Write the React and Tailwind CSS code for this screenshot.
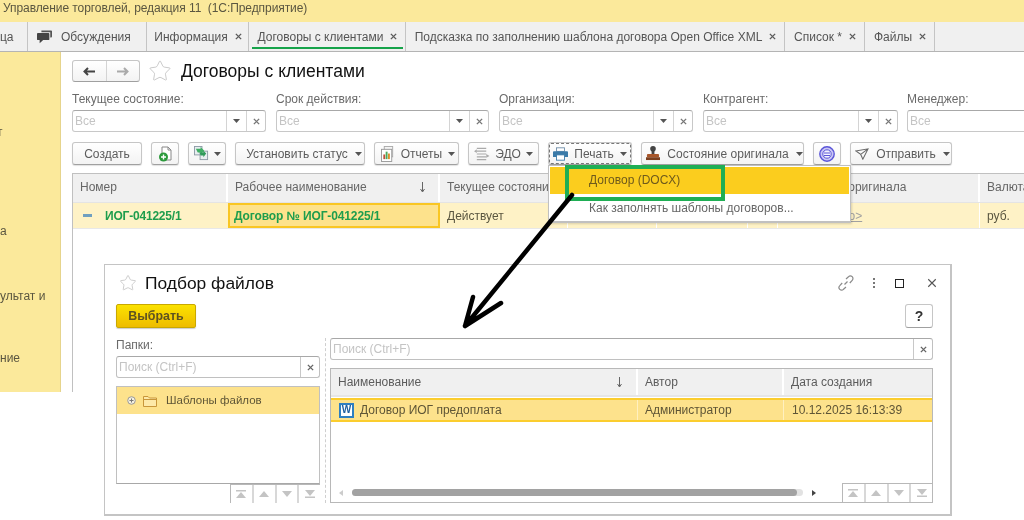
import { Star } from "lucide-react";

const TABS = [
  { label: "ца", w: "w-[28px]", cls: "!justify-start" },
  { label: "Обсуждения", w: "w-[119px]", chat: true, cls: "!justify-start !gap-[9px] pl-[9px]" },
  { label: "Информация", w: "w-[102px]", close: true, cls: "pl-[1px]" },
  { label: "Договоры с клиентами", w: "w-[157px]", close: true, active: true, cls: "pl-[1px]" },
  { label: "Подсказка по заполнению шаблона договора Open Office XML", w: "w-[379px]", close: true, cls: "pl-[1px]" },
  { label: "Список *", w: "w-[80px]", close: true, cls: "pl-[1px]" },
  { label: "Файлы", w: "w-[70px]", close: true, cls: "pl-[1px]" },
];

const FILTERS = [
  { label: "Текущее состояние:", w: "w-[194px]", mr: "mr-[10px]" },
  { label: "Срок действия:", w: "w-[213px]", mr: "mr-[10px]" },
  { label: "Организация:", w: "w-[194px]", mr: "mr-[10px]" },
  { label: "Контрагент:", w: "w-[195px]", mr: "mr-[9px]" },
  { label: "Менеджер:", w: "w-[150px]", open: true },
];

const COLS = [
  { w: "w-[155px]", head: "Номер" },
  { w: "w-[212px]", head: "Рабочее наименование" },
  { w: "w-[128px]", head: "Текущее состояние" },
  { w: "w-[89px]", head: "" },
  { w: "w-[91px]", head: "" },
  { w: "w-[30px]", head: "" },
  { w: "w-[202px]", head: "Состояние оригинала" },
  { w: "w-[60px]", head: "Валюта" },
];

function Caret() {
  return (
    <svg width="7" height="4" viewBox="0 0 7 4" className="shrink-0">
      <polygon points="0,0 7,0 3.5,4" fill="#555" />
    </svg>
  );
}

function Cross({ color = "#5c5c5c", size = 8, width = 1.6 }) {
  return (
    <svg width={size} height={size} viewBox="0 0 8 8" className="shrink-0">
      <path d="M1 1L7 7M7 1L1 7" stroke={color} strokeWidth={width} />
    </svg>
  );
}

function SortArrow() {
  return (
    <svg width="7" height="11" viewBox="0 0 7 11" className="mt-[8px] shrink-0">
      <path d="M3.500 0V9M1.500 7L3.500 10L5.500 7" fill="none" stroke="#555" strokeWidth="0.900" />
    </svg>
  );
}

function ChatIcon() {
  return (
    <svg width="15" height="14" viewBox="0 0 17 15" className="shrink-0">
      <path d="M5 0H16a1 1 0 0 1 1 1V7a1 1 0 0 1-1 1H15V2H5Z" fill="#555" />
      <path d="M1 3H13a1 1 0 0 1 1 1V10a1 1 0 0 1-1 1H7L3 14.500V11H1a1 1 0 0 1-1-1V4a1 1 0 0 1 1-1Z" fill="#444" />
    </svg>
  );
}

function DocPlusIcon() {
  return (
    <svg width="15" height="16" viewBox="0 0 15 16">
      <path d="M4 1H10L13 4V14H4Z" fill="#fff" stroke="#888" />
      <path d="M10 1V4H13" fill="none" stroke="#888" />
      <circle cx="5.500" cy="11" r="4.500" fill="#2c9a3c" />
      <path d="M3 11H8M5.500 8.500V13.500" stroke="#fff" strokeWidth="1.400" />
    </svg>
  );
}

function CopyIcon() {
  return (
    <svg width="15" height="15" viewBox="0 0 16 16">
      <rect x="0.500" y="0.500" width="8" height="9" fill="#e8eef0" stroke="#8d9ca6" />
      <rect x="6.500" y="5.500" width="8" height="9" fill="#e8eef0" stroke="#8d9ca6" />
      <path d="M2 3L7 3L7 1L11 5L7 9L7 7L4 7Z" fill="#3fae64" />
      <path d="M6 7L10 7L10 5L13 8L10 12L10 10L7 10Z" fill="#2f9a5a" />
    </svg>
  );
}

function ReportIcon() {
  return (
    <svg width="14" height="16" viewBox="0 0 15 17">
      <rect x="3.500" y="0.500" width="9" height="11" fill="#f4f4f4" stroke="#aaa" />
      <rect x="0.500" y="3.500" width="11" height="13" fill="#fff" stroke="#999" />
      <rect x="2.500" y="9" width="2" height="5" fill="#c0503b" />
      <rect x="5" y="6" width="2" height="8" fill="#4caa5c" />
      <rect x="7.500" y="8" width="2" height="6" fill="#d9902c" />
    </svg>
  );
}

function EdoIcon() {
  return (
    <svg width="16" height="14" viewBox="0 0 17 14">
      <path d="M3 1H13M3 4H13M3 7H13M3 10H13M3 13H13" stroke="#aaa" strokeWidth="1.200" />
      <path d="M0 4L3 2V6Z" fill="#aaa" />
      <path d="M16.500 9L13 7V11Z" fill="#aaa" />
    </svg>
  );
}

function PrinterIcon() {
  return (
    <svg width="15" height="14" viewBox="0 0 17 15">
      <rect x="4" y="0.500" width="9" height="4" fill="#fff" stroke="#6a8aa6" />
      <path d="M1 4.500H16a1 1 0 0 1 1 1V11H0V5.500a1 1 0 0 1 1-1Z" fill="#3a7aa8" />
      <rect x="4" y="8.500" width="9" height="6" fill="#fff" stroke="#3a7aa8" />
    </svg>
  );
}

function StampIcon() {
  return (
    <svg width="14" height="15" viewBox="0 0 15 16">
      <circle cx="7.500" cy="3" r="3" fill="#444" />
      <rect x="6" y="5" width="3" height="4" fill="#444" />
      <rect x="1" y="8.500" width="13" height="3.500" rx="1" fill="#a8562a" />
      <rect x="0" y="12" width="15" height="3" fill="#7c3f1e" />
    </svg>
  );
}

function PurpleIcon() {
  return (
    <svg width="16" height="16" viewBox="0 0 16 16">
      <circle cx="8" cy="8" r="7.200" fill="#c9c6f4" stroke="#5a55d8" strokeWidth="1.400" />
      <circle cx="8" cy="8" r="4.200" fill="#f4f4ff" stroke="#5a55d8" />
      <path d="M5 7H11M5 9.500H11" stroke="#5a55d8" />
    </svg>
  );
}

function PlaneIcon() {
  return (
    <svg width="14" height="12" viewBox="0 0 16 14">
      <path d="M0.800 3.500L15 1L9 13L6.500 7.500ZM6.500 7.500L15 1" fill="none" stroke="#666" strokeWidth="1.200" />
    </svg>
  );
}

function WordIcon() {
  return (
    <div className="flex h-[15px] w-[15px] shrink-0 items-center justify-center border-2 border-[#2f7fc1] bg-white text-[10px] leading-none font-bold text-[#1f5f9f]">
      W
    </div>
  );
}

function FolderIcon() {
  return (
    <svg width="14" height="12" viewBox="0 0 14 12">
      <path d="M0.500 11.500V1.500H5L6.500 3H13.500V11.500Z" fill="#fde9a8" stroke="#c8963a" />
      <path d="M0.500 4.500H13.500" stroke="#c8963a" />
    </svg>
  );
}

function PlusCircle() {
  return (
    <svg width="9" height="9" viewBox="0 0 9 9">
      <circle cx="4.500" cy="4.500" r="3.800" fill="#f4f0e0" stroke="#999" />
      <path d="M2.500 4.500H6.500M4.500 2.500V6.500" stroke="#777" />
    </svg>
  );
}

function LinkIcon() {
  return (
    <svg width="16" height="16" viewBox="0 0 16 16" fill="none" stroke="#8a8a8a" strokeWidth="1.200">
      <path d="M6.500 9.500L9.500 6.500" />
      <path d="M8 4L10.500 1.700a2.600 2.600 0 0 1 3.700 3.700L11.800 8" />
      <path d="M8 12L5.500 14.300a2.600 2.600 0 0 1-3.700-3.700L4.200 8" />
    </svg>
  );
}

function NavIcon({ dir }) {
  const paths = {
    first: <><rect x="0" y="0" width="10" height="1.500" fill="#c4c4c4" /><polygon points="5,2 10,8 0,8" fill="#c4c4c4" /></>,
    up: <polygon points="5,1 10,7 0,7" fill="#c4c4c4" />,
    down: <polygon points="0,1 10,1 5,7" fill="#c4c4c4" />,
    last: <><polygon points="0,0 10,0 5,6 " fill="#c4c4c4" /><rect x="0" y="6.500" width="10" height="1.500" fill="#c4c4c4" /></>,
  };
  return <svg width="10" height="8" viewBox="0 0 10 8">{paths[dir]}</svg>;
}

function NavButtons() {
  return (
    <div className="flex h-[19px] w-[90px] shrink-0 border-t border-l border-[#b8b8b8] bg-white">
      {["first", "up", "down", "last"].map((dir, i) => (
        <div key={dir} className={`flex flex-1 items-center justify-center ${i < 3 ? "border-r-2 border-[#d8d8d8]" : ""}`}>
          <NavIcon dir={dir} />
        </div>
      ))}
    </div>
  );
}

function Button({ w, children, cls = "" }) {
  return (
    <div className={`flex h-[23px] ${w} shrink-0 items-center justify-center gap-[7px] rounded-[3px] border border-[#c6c6c6] border-b-[#a0a0a0] bg-gradient-to-b from-white to-[#f3f3f3] text-[12px] text-[#5c5c5c] shadow-[0_1px_1px_rgba(0,0,0,0.12)] ${cls}`}>
      {children}
    </div>
  );
}

function Filter({ label, w, mr = "", open }) {
  return (
    <div className={`${w} ${mr} shrink-0`}>
      <div className="h-[18px] text-[12px] leading-[14px] text-[#6a6a6a]">{label}</div>
      <div className={`flex h-[22px] rounded-[3px] border border-[#c8c8c8] border-t-[#a8a8a8] bg-white text-[12px] ${open ? "rounded-r-none border-r-0" : ""}`}>
        <div className="flex-1 pl-[2px] leading-[21px] text-[#c4c4c4]">Все</div>
        {!open && (
          <>
            <div className="flex w-[20px] items-center justify-center border-l border-[#d4d4d4]"><Caret /></div>
            <div className="flex w-[19px] items-center justify-center border-l border-[#d4d4d4]"><Cross color="#777" size={7} /></div>
          </>
        )}
      </div>
    </div>
  );
}

function SearchBox() {
  return (
    <div className="flex h-[22px] rounded-[3px] border border-[#c0c0c0] border-t-[#a8a8a8] bg-white text-[12px]">
      <div className="flex-1 pl-[2px] leading-[21px] text-[#c4c4c4]">Поиск (Ctrl+F)</div>
      <div className="flex w-[19px] items-center justify-center border-l border-[#c8c8c8]"><Cross color="#666" size={7} /></div>
    </div>
  );
}

function FileDialog() {
  return (
    <div className="absolute top-[264px] left-[104px] h-[252px] w-[848px] border border-r-2 border-b-2 border-[#c4c4c4] bg-white text-[#5c5c5c]">
      <div className="mb-[3px] flex h-[36px] items-center pr-[13px] pl-[14px]">
        <Star size={18} strokeWidth={1} color="#bdbdbd" />
        <div className="ml-[8px] flex-1 text-[17.4px] text-[#111]">Подбор файлов</div>
        <LinkIcon />
        <div className="ml-[19px] flex flex-col gap-[1.500px]">
          <div className="h-[2.500px] w-[2.500px] bg-[#777]" />
          <div className="h-[2.500px] w-[2.500px] bg-[#777]" />
          <div className="h-[2.500px] w-[2.500px] bg-[#777]" />
        </div>
        <div className="ml-[20px] h-[9px] w-[9px] border border-[#222]" />
        <div className="ml-[23px]"><Cross color="#555" size={10} width={0.9} /></div>
      </div>
      <div className="flex justify-between pr-[17px] pl-[11px]">
        <div className="flex h-[24px] w-[80px] items-center justify-center rounded-[2px] border border-[#c9a800] bg-gradient-to-b from-[#fbe200] to-[#eebc00] text-[12.4px] font-bold text-[#5e5320] shadow-[0_1px_1px_rgba(0,0,0,0.2)]">
          Выбрать
        </div>
        <div className="flex h-[24px] w-[28px] items-center justify-center rounded-[3px] border border-[#c6c6c6] border-b-[#a0a0a0] bg-white text-[14px] font-bold text-[#333]">
          ?
        </div>
      </div>
      <div className="mt-[10px] flex pl-[11px]">
        <div className="w-[204px] shrink-0">
          <div className="h-[18px] text-[12px] leading-[14px] text-[#6a6a6a]">Папки:</div>
          <SearchBox />
          <div className="mt-[8px] flex h-[117px] flex-col">
            <div className="flex-1 border border-[#c0c0c0] border-b-[#a8a8a8]">
              <div className="flex h-[27px] items-center bg-[#fde28c] pl-[10px] text-[11.5px]">
                <PlusCircle />
                <div className="ml-[7px]"><FolderIcon /></div>
                <div className="ml-[9px] text-[#5e5536]">Шаблоны файлов</div>
              </div>
            </div>
            <div className="flex justify-end"><NavButtons /></div>
          </div>
        </div>
        <div className="flex w-[10px] shrink-0 justify-center">
          <div className="w-0 border-l border-dashed border-[#cfcfcf]" />
        </div>
        <div className="w-[603px] shrink-0">
          <SearchBox />
          <div className="mt-[8px] flex h-[135px] flex-col border border-[#b8b8b8] text-[12px]">
            <div className="flex h-[28px] shrink-0 border-b-2 border-[#e6e6e6] bg-[#f0f0f0] leading-[27px]">
              <div className="flex w-[307px] justify-between border-r-2 border-white pr-[13px] pl-[7px]">
                <span>Наименование</span>
                <SortArrow />
              </div>
              <div className="w-[146px] border-r-2 border-white pl-[7px]">Автор</div>
              <div className="flex-1 pl-[7px]">Дата создания</div>
            </div>
            <div className="mt-[1px] flex h-[24px] shrink-0 border-y-2 border-[#fbcd2e] bg-[#fde28c] leading-[20px] text-[#5e5536]">
              <div className="flex w-[307px] items-center gap-[6px] border-r border-[#fff0c0] pl-[8px]">
                <WordIcon />
                <span>Договор ИОГ предоплата</span>
              </div>
              <div className="w-[146px] border-r border-[#fff0c0] pl-[7px]">Администратор</div>
              <div className="flex-1 pl-[8px]">10.12.2025 16:13:39</div>
            </div>
            <div className="flex flex-1 items-end">
              <div className="flex h-[19px] flex-1 items-center">
                <svg width="4" height="6" viewBox="0 0 4 6" className="ml-[8px]"><polygon points="4,0 4,6 0,3" fill="#ccc" /></svg>
                <div className="ml-[9px] h-[7px] w-[451px] rounded-full bg-[#e2e2e2]">
                  <div className="h-full w-[445px] rounded-full bg-[#a2a2a2]" />
                </div>
                <svg width="4" height="6" viewBox="0 0 4 6" className="ml-[9px]"><polygon points="0,0 0,6 4,3" fill="#444" /></svg>
              </div>
              <NavButtons />
            </div>
          </div>
        </div>
      </div>
    </div>
  );
}

export default function App() {
  return (
    <div className="relative h-[520px] w-[1024px] overflow-hidden bg-white font-['Liberation_Sans',Arial,sans-serif] text-[12px] blur-[0.35px]">
      {/* Title bar */}
      <div className="h-[22px] bg-[#fbe99b] pl-[3px] text-[12px] leading-[17px] tracking-[-0.07px] whitespace-pre text-[#5a5640]">
        Управление торговлей, редакция 11  (1С:Предприятие)
      </div>

      {/* Tabs */}
      <div className="flex h-[30px] border-b-[1.500px] border-[#b4b4b4] bg-[#f0f0f0] text-[#555]">
        {TABS.map((t) => (
          <div key={t.label} className={`relative flex ${t.w} shrink-0 items-center justify-center gap-[7px] border-r border-[#c4c4c4] ${t.cls}`}>
            {t.chat && <ChatIcon />}
            <span className="whitespace-nowrap">{t.label}</span>
            {t.close && <Cross size={7} />}
            {t.active && <div className="absolute right-[2px] bottom-[2px] left-[3px] h-[2px] bg-[#16a34a]" />}
          </div>
        ))}
      </div>

      <div className="flex h-[340px]">
        {/* Left panel, cut off by the crop */}
        <div className="w-[61px] shrink-0 overflow-hidden border-r border-[#e6d48c] bg-[#fbe99b] whitespace-nowrap text-[#5a5640]">
          <div className="mt-[73px] -ml-[3px] h-[14px] leading-[14px]">т</div>
          <div className="mt-[85px] h-[14px] leading-[14px]">а</div>
          <div className="mt-[51px] h-[14px] leading-[14px]">ультат и</div>
          <div className="mt-[48px] h-[14px] leading-[14px]">ние</div>
        </div>

        {/* Main form */}
        <div className="flex min-w-0 flex-1 flex-col overflow-hidden pt-[8px] pl-[11px]">
          <div className="flex h-[22px] items-center">
            <div className="flex h-[22px] w-[68px] rounded-[3px] border border-[#c6c6c6] border-b-[#a0a0a0] bg-gradient-to-b from-white to-[#f3f3f3]">
              <div className="flex flex-1 items-center justify-center border-r border-[#d4d4d4] text-[#444]">
                <svg width="12" height="9" viewBox="0 0 12 9"><path d="M12 4.500H3M5 1L1.500 4.500L5 8" fill="none" stroke="#444" strokeWidth="2" /></svg>
              </div>
              <div className="flex flex-1 items-center justify-center">
                <svg width="12" height="9" viewBox="0 0 12 9"><path d="M0 4.500H9M7 1L10.500 4.500L7 8" fill="none" stroke="#aaa" strokeWidth="2" /></svg>
              </div>
            </div>
            <div className="ml-[8px]"><Star size={24} strokeWidth={0.8} color="#bdbdbd" /></div>
            <div className="ml-[9px] text-[17.5px] text-[#111]">Договоры с клиентами</div>
          </div>

          <div className="mt-[10px] flex">
            {FILTERS.map((f) => <Filter key={f.label} {...f} />)}
          </div>

          <div className="mt-[10px] flex gap-[9px]">
            <Button w="w-[70px]">Создать</Button>
            <Button w="w-[28px]"><DocPlusIcon /></Button>
            <Button w="w-[38px]" cls="!gap-[5px] pl-[1px]"><CopyIcon /><Caret /></Button>
            <Button w="w-[130px]" cls="pl-[8px]">Установить статус<Caret /></Button>
            <Button w="w-[85px]" cls="!gap-[6px] pl-[3px]"><ReportIcon />Отчеты<Caret /></Button>
            <Button w="w-[71px]" cls="!gap-[5px]"><EdoIcon />ЭДО<Caret /></Button>
            <Button w="w-[84px]" cls="!gap-[6px] outline-1 outline-dashed -outline-offset-2 outline-[#777]"><PrinterIcon />Печать<Caret /></Button>
            <Button w="w-[163px]" cls="pl-[4px]"><StampIcon />Состояние оригинала<Caret /></Button>
            <Button w="w-[28px]"><PurpleIcon /></Button>
            <Button w="w-[102px]" cls="pl-[3px]"><PlaneIcon />Отправить<Caret /></Button>
          </div>

          {/* List */}
          <div className="mt-[8px] flex-1 border-t border-l border-[#c0c0c0]">
            <div className="flex h-[29px] border-b border-[#e4e4e4] bg-[#f0f0f0] leading-[27px] text-[#666]">
              {COLS.map((c, i) => (
                <div key={i} className={`flex ${c.w} shrink-0 justify-between overflow-hidden border-r-2 border-white pr-[12px] pl-[7px] whitespace-nowrap`}>
                  <span>{c.head}</span>
                  {i === 1 && <SortArrow />}
                </div>
              ))}
            </div>
            <div className="flex h-[26px] border-b border-[#e8e8e8] bg-[#fef2c6] leading-[26px] text-[#5a5640]">
              <div className={`flex ${COLS[0].w} shrink-0 items-center pl-[10px] font-bold tracking-[-0.2px] text-[#1f9d4d]`}>
                <div className="h-[3px] w-[9px] bg-[#6f9fc0]" />
                <span className="ml-[13px]">ИОГ-041225/1</span>
              </div>
              <div className={`${COLS[1].w} shrink-0 border-2 border-[#f9c623] bg-[#fde28c] pl-[4px] leading-[22px] font-bold tracking-[-0.12px] text-[#1f9d4d]`}>
                Договор № ИОГ-041225/1
              </div>
              <div className={`${COLS[2].w} shrink-0 border-r border-white pl-[7px]`}>Действует</div>
              <div className={`${COLS[3].w} shrink-0 border-r border-white`} />
              <div className={`${COLS[4].w} shrink-0 border-r border-white`} />
              <div className={`${COLS[5].w} shrink-0 border-r border-white`} />
              <div className={`${COLS[6].w} shrink-0 border-r border-white pl-[8px] text-[#a0a0a0] underline`}>&lt;Не указано&gt;</div>
              <div className={`${COLS[7].w} shrink-0 pl-[7px]`}>руб.</div>
            </div>
          </div>
        </div>
      </div>

      {/* Dropdown of the print button */}
      <div className="absolute top-[165px] left-[548px] h-[58px] w-[303px] border border-b-2 border-[#c0c0c0] bg-white p-[1px] text-[#6a6040] shadow-[1px_1px_2px_rgba(0,0,0,0.15)]">
        <div className="h-[27px] bg-[#fbcd1e] pl-[39px] leading-[26px] text-[#6e5a1c]">Договор (DOCX)</div>
        <div className="h-[27px] pl-[39px] leading-[28px] text-[#666]">Как заполнять шаблоны договоров...</div>
      </div>

      <FileDialog />

      {/* Annotation drawn over the screenshot */}
      <div className="absolute top-[165px] left-[565px] h-[36px] w-[160px] border-4 border-[#1fae54]" />
      <svg width="1024" height="520" viewBox="0 0 1024 520" className="pointer-events-none absolute top-0 left-0">
        <path d="M572 195L465 326M473 297L465 326L501 303" fill="none" stroke="#000" strokeWidth="4.500" strokeLinecap="round" strokeLinejoin="round" />
      </svg>
    </div>
  );
}
